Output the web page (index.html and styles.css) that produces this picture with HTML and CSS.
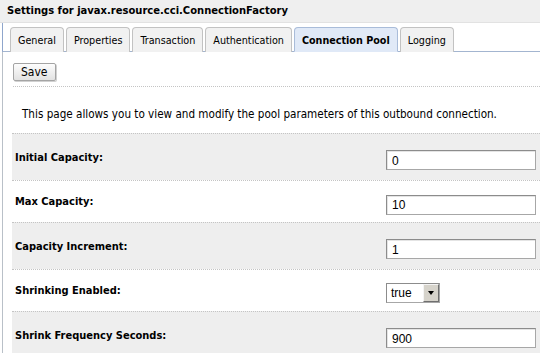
FILE: index.html
```html
<!DOCTYPE html>
<html>
<head>
  <title>Settings for javax.resource.cci.ConnectionFactory</title>
  <link rel="stylesheet" href="styles.css">
</head>
<body>
  <div class="title-bar">Settings for javax.resource.cci.ConnectionFactory</div>

  <div class="panel">
    <div class="tabs">
      <div class="tab">General</div>
      <div class="tab">Properties</div>
      <div class="tab">Transaction</div>
      <div class="tab">Authentication</div>
      <div class="tab active">Connection Pool</div>
      <div class="tab">Logging</div>
    </div>

    <div class="toolbar">
      <button class="btn">Save</button>
    </div>

    <p class="intro">This page allows you to view and modify the pool parameters of this outbound connection.</p>

    <div class="form">
      <div class="form-row shaded">
        <label class="form-label" for="initial">Initial Capacity:</label>
        <input class="text-input" id="initial" type="text" value="0">
      </div>
      <div class="form-row">
        <label class="form-label" for="max">Max Capacity:</label>
        <input class="text-input" id="max" type="text" value="10">
      </div>
      <div class="form-row shaded">
        <label class="form-label" for="increment">Capacity Increment:</label>
        <input class="text-input" id="increment" type="text" value="1">
      </div>
      <div class="form-row">
        <label class="form-label">Shrinking Enabled:</label>
        <div class="select">
          <span class="select-value">true</span>
          <span class="select-arrow"></span>
        </div>
      </div>
      <div class="form-row shaded">
        <label class="form-label" for="shrink">Shrink Frequency Seconds:</label>
        <input class="text-input" id="shrink" type="text" value="900">
      </div>
    </div>
  </div>
</body>
</html>
```

FILE: styles.css
```css
:root {
  --ui-font: Tahoma, "DejaVu Sans Condensed", "DejaVu Sans", sans-serif;
  --field-font: "Liberation Sans", Arial, sans-serif;
  --text-color: #000;
  --row-bg: #eeeeee;
  --dotted: #c4c4c4;
  --tab-line: #a3b5d0;
}

* {
  margin: 0;
  padding: 0;
  box-sizing: border-box;
}

body {
  width: 540px;
  height: 353px;
  overflow: hidden;
  font-family: var(--ui-font);
  font-stretch: condensed;
  font-size: 11px;
  color: var(--text-color);
  background-color: #fff;
}

.title-bar {
  height: 23px;
  padding: 4px 0 0 7px;
  background-color: #efefef;
  border-bottom: 1px solid #e2e2e2;
  font-weight: bold;
  font-size: 11.1px;
}

.panel {
  margin-left: 2px;
  border-left: 1px solid #b9c0c8;
  min-height: 330px;
}

.tabs {
  display: flex;
  gap: 2px;
  padding: 4px 0 0 7px;
  border-bottom: 1px solid var(--tab-line);
  margin-left: -1px;
  border-left: 1px solid #8fa6cc;
}

.tab {
  height: 25px;
  padding: 6px 7px 0;
  background-color: #f1f1f1;
  border: 1px solid #c2c2c2;
  border-bottom: none;
  border-radius: 4px 4px 0 0;
  margin-bottom: -1px;
  white-space: nowrap;
  font-size: 10.7px;
}

.tab.active {
  background-color: #e0e9f7;
  border-color: #a9bcd9;
  font-weight: bold;
  border-bottom: 1px solid #e0e9f7;
}

.toolbar {
  padding-top: 11px;
  height: 35px;
  border-bottom: 1px dotted var(--dotted);
  margin-left: 10px;
}

.btn {
  height: 18px;
  padding: 0 7px;
  font-family: var(--ui-font);
  font-stretch: condensed;
  font-size: 12px;
  color: #000;
  background: linear-gradient(#fdfdfd, #e2e2e2);
  border: 1px solid #a4a4a4;
  border-radius: 2px;
  box-shadow: 1px 1px 0 #d0d0d0;
}

.intro {
  padding: 21px 0 0 19px;
  height: 46px;
  line-height: 13px;
  font-size: 11.6px;
}

.form {
  margin-left: 9px;
}

.form-row {
  display: flex;
  align-items: center;
  height: 42px;
  padding-left: 3px;
  border-top: 1px dotted var(--dotted);
}

.form-row.shaded {
  height: 47px;
  background-color: var(--row-bg);
}

.form-label {
  width: 371px;
  font-weight: bold;
}

.text-input {
  width: 150px;
  height: 20px;
  margin-top: 6px;
  padding: 1px 5px 0;
  font-family: var(--field-font);
  font-size: 12px;
  color: #000;
  background-color: #fff;
  border: 1px solid #a7a7a7;
  border-top-color: #8c8c8c;
  border-left-color: #8c8c8c;
  box-shadow: inset 1px 1px 0 #e4e4e4;
  outline: none;
}

.select {
  display: flex;
  width: 54px;
  height: 20px;
  margin-top: 4px;
  background-color: #fff;
  border: 1px solid #a7a7a7;
  border-top-color: #8c8c8c;
  border-left-color: #8c8c8c;
}

.select-value {
  flex: 1;
  padding: 2px 0 0 4px;
  font-family: var(--field-font);
  font-size: 12px;
}

.select-arrow {
  width: 16px;
  display: flex;
  align-items: center;
  justify-content: center;
  background-color: #d6d3cb;
  border: 1px solid;
  border-color: #f4f4f4 #6f6f6f #6f6f6f #f4f4f4;
}

.select-arrow::after {
  content: "";
  border-left: 3.5px solid transparent;
  border-right: 3.5px solid transparent;
  border-top: 4px solid #000;
}
```
